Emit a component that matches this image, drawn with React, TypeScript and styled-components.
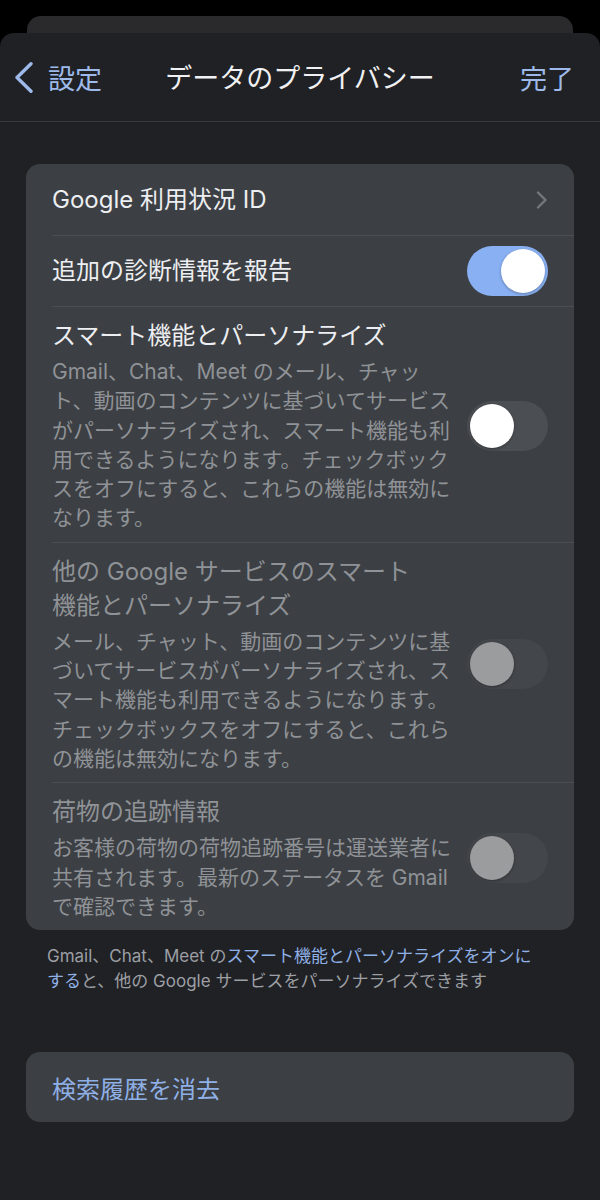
import React from "react";
import styled, { createGlobalStyle } from "styled-components";

const Global = createGlobalStyle`
  html, body { margin: 0; padding: 0; background: #000; }
  body {
    font-family: "Inter", "Noto Sans CJK JP", sans-serif;
    -webkit-font-smoothing: antialiased;
  }
  * { box-sizing: border-box; }
`;

const Page = styled.div`
  width: 600px;
  min-height: 1200px;
  background: #000;
  padding-top: 16px;
  display: flex;
  flex-direction: column;
`;

const BackSheet = styled.div`
  height: 17px;
  margin: 0 27px;
  background: #2a2a2c;
  border-radius: 14px 14px 0 0;
`;

const Sheet = styled.div`
  flex: 1;
  background: #202124;
  border-radius: 14px 14px 0 0;
  display: flex;
  flex-direction: column;
`;

const Header = styled.header`
  height: 89px;
  display: grid;
  grid-template-columns: 1fr auto 1fr;
  align-items: center;
  padding: 0 26px;
  border-bottom: 1px solid #38393c;
`;

const BackButton = styled.div`
  display: flex;
  align-items: center;
  gap: 15px;
  margin-left: -11px;
  color: #9dbaea;
  font-size: 27px;
  justify-self: start;
`;

const Title = styled.h1`
  margin: 0 0 2px;
  font-size: 27px;
  font-weight: 400;
  color: #f1f1f3;
  justify-self: center;
`;

const Done = styled.div`
  justify-self: end;
  font-size: 27px;
  color: #9dbaea;
`;

const Content = styled.main`
  padding: 42px 26px 0;
  display: flex;
  flex-direction: column;
`;

const Card = styled.section`
  background: #3c3f43;
  border-radius: 14px;
  padding-left: 26px;
  overflow: hidden;
`;

const Row = styled.div<{ $first?: boolean; $tall?: boolean }>`
  display: flex;
  align-items: center;
  gap: 10px;
  padding-right: 26px;
  border-top: ${(p) => (p.$first ? "none" : "1px solid #4a4d51")};
  min-height: 71px;
  padding-top: ${(p) => (p.$tall ? "12px" : "0")};
  padding-bottom: ${(p) => (p.$tall ? "9px" : "0")};
`;

const RowLabel = styled.div`
  flex: 1;
  font-size: 24px;
  line-height: 34px;
  color: #eceef1;
`;

const TextCol = styled.div`
  flex: 1;
  display: flex;
  flex-direction: column;
  gap: 4px;
`;

const RowTitle = styled.div<{ $disabled?: boolean }>`
  font-size: 24px;
  line-height: 34px;
  color: ${(p) => (p.$disabled ? "#8f9296" : "#eceef1")};
`;

const RowDesc = styled.div`
  font-size: 21px;
  line-height: 29.3px;
  color: #8f9296;
  white-space: nowrap;
`;

const Track = styled.div<{ $on?: boolean; $disabled?: boolean }>`
  width: 81px;
  height: 50px;
  flex-shrink: 0;
  border-radius: 25px;
  padding: 3px;
  display: flex;
  justify-content: ${(p) => (p.$on ? "flex-end" : "flex-start")};
  align-items: center;
  background: ${(p) =>
    p.$on ? "#89b0f2" : p.$disabled ? "#43464a" : "#4b4e52"};
`;

const Knob = styled.div<{ $disabled?: boolean }>`
  width: 44px;
  height: 44px;
  border-radius: 50%;
  background: ${(p) => (p.$disabled ? "#9b9c9e" : "#ffffff")};
  box-shadow: 0 1px 3px rgba(0, 0, 0, 0.3);
`;

const Footer = styled.p`
  margin: 14px 0 0;
  padding: 0 21px;
  font-size: 17px;
  line-height: 25px;
  color: #9c9fa4;
`;

const Link = styled.span`
  color: #8fb0e6;
`;

const ActionCard = styled.section`
  margin-top: 58px;
  height: 70px;
  background: #3c3f43;
  border-radius: 14px;
  padding: 0 26px;
  display: flex;
  align-items: center;
  font-size: 24px;
  color: #8fb0e6;
`;

const Toggle = ({ on, disabled }: { on?: boolean; disabled?: boolean }) => (
  <Track $on={on} $disabled={disabled}>
    <Knob $disabled={disabled} />
  </Track>
);

const Lines = ({ lines }: { lines: string[] }) => (
  <div>
    {lines.map((l, i) => (
      <RowDesc key={i}>{l}</RowDesc>
    ))}
  </div>
);

export default function App() {
  return (
    <>
      <Global />
      <Page>
        <BackSheet />
        <Sheet>
          <Header>
            <BackButton>
              <svg width="18" height="31" viewBox="0 0 18 31" fill="none">
                <polyline
                  points="16,1.8 2,15.5 16,29.2"
                  stroke="#9dbaea"
                  strokeWidth="3.4"
                  strokeLinecap="round"
                  strokeLinejoin="round"
                />
              </svg>
              <span>設定</span>
            </BackButton>
            <Title>データのプライバシー</Title>
            <Done>完了</Done>
          </Header>
          <Content>
            <Card>
              <Row $first>
                <RowLabel>Google 利用状況 ID</RowLabel>
                <svg width="12" height="18" viewBox="0 0 12 18" fill="none">
                  <polyline
                    points="2,1.5 9.5,9 2,16.5"
                    stroke="#74777b"
                    strokeWidth="2.4"
                    strokeLinecap="round"
                    strokeLinejoin="round"
                  />
                </svg>
              </Row>
              <Row>
                <RowLabel>追加の診断情報を報告</RowLabel>
                <Toggle on />
              </Row>
              <Row $tall>
                <TextCol>
                  <RowTitle>スマート機能とパーソナライズ</RowTitle>
                  <Lines
                    lines={[
                      "Gmail、Chat、Meet のメール、チャッ",
                      "ト、動画のコンテンツに基づいてサービス",
                      "がパーソナライズされ、スマート機能も利",
                      "用できるようになります。チェックボック",
                      "スをオフにすると、これらの機能は無効に",
                      "なります。",
                    ]}
                  />
                </TextCol>
                <Toggle />
              </Row>
              <Row $tall>
                <TextCol>
                  <RowTitle $disabled>
                    他の Google サービスのスマート
                    <br />
                    機能とパーソナライズ
                  </RowTitle>
                  <Lines
                    lines={[
                      "メール、チャット、動画のコンテンツに基",
                      "づいてサービスがパーソナライズされ、ス",
                      "マート機能も利用できるようになります。",
                      "チェックボックスをオフにすると、これら",
                      "の機能は無効になります。",
                    ]}
                  />
                </TextCol>
                <Toggle disabled />
              </Row>
              <Row $tall>
                <TextCol>
                  <RowTitle $disabled>荷物の追跡情報</RowTitle>
                  <Lines
                    lines={[
                      "お客様の荷物の荷物追跡番号は運送業者に",
                      "共有されます。最新のステータスを Gmail",
                      "で確認できます。",
                    ]}
                  />
                </TextCol>
                <Toggle disabled />
              </Row>
            </Card>
            <Footer>
              Gmail、Chat、Meet の<Link>スマート機能とパーソナライズをオンに</Link>
              <br />
              <Link>する</Link>と、他の Google サービスをパーソナライズできます
            </Footer>
            <ActionCard>検索履歴を消去</ActionCard>
          </Content>
        </Sheet>
      </Page>
    </>
  );
}
